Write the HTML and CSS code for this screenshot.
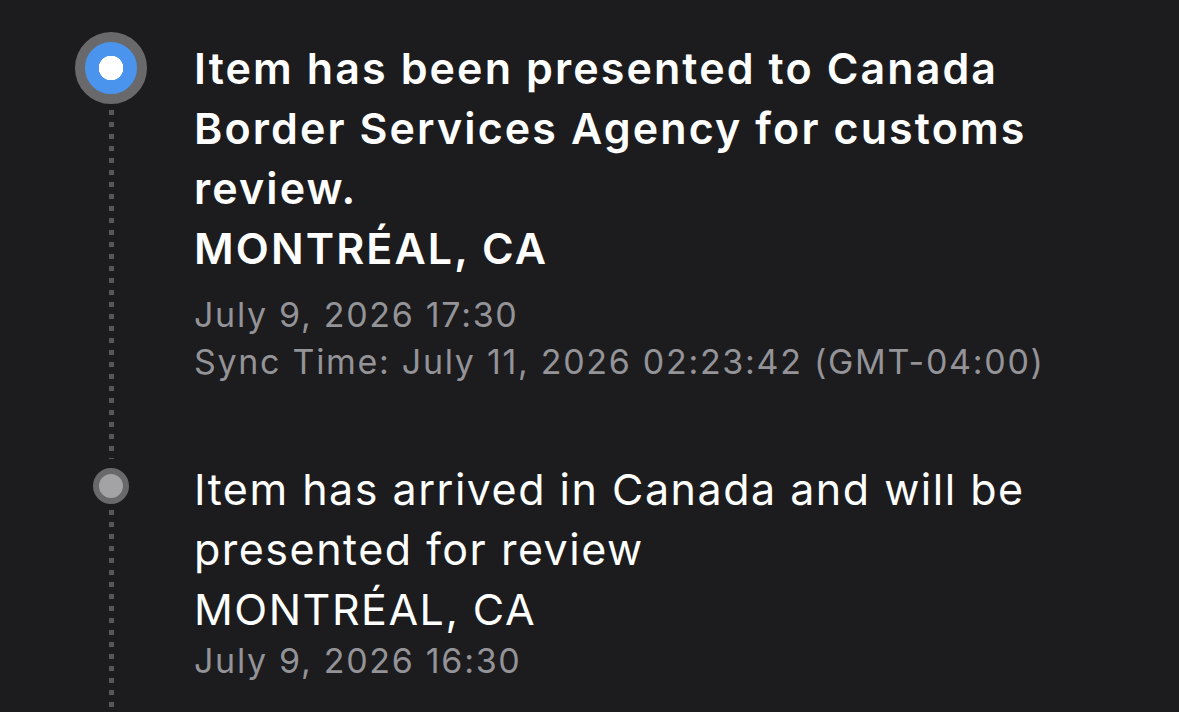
FILE: index.html
```html
<!DOCTYPE html>
<html lang="en">
<head>
    <meta charset="utf-8">
    <meta name="viewport" content="width=device-width, initial-scale=1">
    <title>Tracking Details</title>
    <link rel="stylesheet" href="styles.css">
</head>
<body>
    <ul class="timeline">
        <li class="event current">
            <div class="rail">
                <span class="dot"></span>
                <span class="line"></span>
            </div>
            <div class="info">
                <p class="status">Item has been presented to Canada Border Services Agency for customs review.</p>
                <p class="place">MONTRÉAL, CA</p>
                <div class="times">
                    <p>July 9, 2026 17:30</p>
                    <p>Sync Time: July 11, 2026 02:23:42 (GMT-04:00)</p>
                </div>
            </div>
        </li>
        <li class="event">
            <div class="rail">
                <span class="dot"></span>
                <span class="line"></span>
            </div>
            <div class="info">
                <p class="status">Item has arrived in Canada and will be presented for review</p>
                <p class="place">MONTRÉAL, CA</p>
                <div class="times">
                    <p>July 9, 2026 16:30</p>
                </div>
            </div>
        </li>
    </ul>
</body>
</html>
```
FILE: styles.css
```css
html, body {
    margin: 0;
    height: 100%;
    background-color: #1c1c1e;
    overflow: hidden;
}
body {
    font-family: Inter, "Noto Sans", sans-serif;
    color: #ffffff;
}
p {
    margin: 0;
}
.timeline {
    list-style: none;
    margin: 0;
    padding: 32px 100px 0 75px;
}
.event {
    display: grid;
    grid-template-columns: 72px 1fr;
    column-gap: 47px;
}
.rail {
    display: flex;
    flex-direction: column;
    align-items: center;
}
.line {
    flex: 1;
    width: 5px;
    margin-top: 6px;
    background: repeating-linear-gradient(to bottom, #575759 0 5px, transparent 5px 12px);
}
.dot {
    box-sizing: border-box;
    border-radius: 50%;
    flex: none;
}
.status, .place {
    font-size: 43px;
    line-height: 60px;
    letter-spacing: 1.5px;
}
.times p {
    font-size: 34px;
    line-height: 47px;
    letter-spacing: 1.7px;
    color: #939398;
}

/* the newest scan: big blue marker, bold text */
.current .dot {
    width: 72px;
    height: 72px;
    border: 10px solid #69696b;
    background: radial-gradient(circle, #ffffff 0 12px, #4a94ee 12.5px);
}
.current .info {
    margin-top: 6px;
    padding-bottom: 74px;
}
.current .status, .current .place {
    font-weight: 560;
    letter-spacing: 2.1px;
}
.current .times {
    margin-top: 13px;
}

/* older scans */
.event:not(.current) .dot {
    width: 36px;
    height: 36px;
    margin-top: 9px;
    border: 6px solid #69696b;
    background: #a3a3a5;
}
.event:not(.current) .line {
    margin-top: 6px;
    min-height: 200px;
}
.event:not(.current) .times {
    margin-top: -2px;
}
```
